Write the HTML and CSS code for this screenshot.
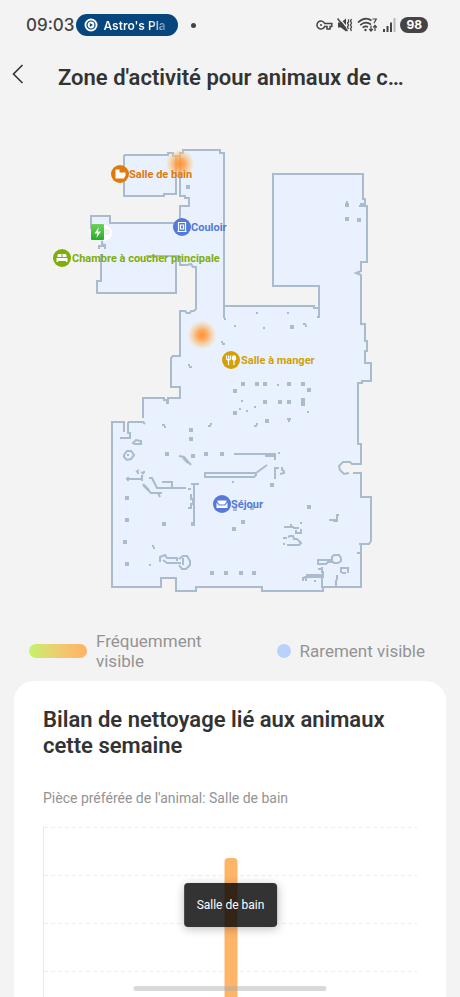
FILE: index.html
```
<!DOCTYPE html>
<html lang="fr">
<head>
  <meta charset="utf-8"/>
  <meta name="viewport" content="width=device-width, initial-scale=1.0"/>
  <title>Zone d'activité</title>
  <link rel="stylesheet" href="styles.css">
</head>
<body>
  <div class="status-bar">
    <span class="clock">09:03</span>
    <div class="now-playing">
      <svg width="14" height="14" viewBox="0 0 14 14"><circle cx="7" cy="7" r="6.5" fill="#fff"/><circle cx="7" cy="7" r="4" fill="none" stroke="#07467d" stroke-width="1.2"/><path d="M5.8 4.9 9 7 5.8 9.1z" fill="#07467d"/></svg>
      <span>Astro's Pla</span>
    </div>
    <span class="dot"></span>
    <div class="status-icons">
      <svg width="17" height="16" viewBox="0 0 17 16" fill="none" stroke="#444" stroke-width="1.5"><path d="M8.6 6.4A4 4 0 1 0 8.6 9.6H11V12H14V9.6H15.8V6.4z"/><circle cx="5" cy="8" r="1" fill="#444" stroke="none"/></svg>
      <svg width="16" height="16" viewBox="0 0 16 16"><path d="M1 5.5H4L9 1.5V14.5L4 10.5H1z" fill="#444"/><path d="M1.500 0 12 13" stroke="#f3f3f3" stroke-width="1.2"/><path d="M0.500 1.5 10.500 14" fill="none" stroke="#444" stroke-width="1.5"/><path d="M11.500 2.500v2.500l-1 1 1 2-1 2 1 2M14.500 2l-1 2 1 2-1 2 1 2-1 2 1 2" fill="none" stroke="#444" stroke-width="1.3"/></svg>
      <svg width="21" height="16" viewBox="0 0 21 16" fill="none" stroke="#444" stroke-width="1.6"><path d="M1 5.5Q8 -1 14.5 3.5M3.2 8.2Q8.5 3.5 14 7.5M5.6 10.6Q8.5 8.5 11 10"/><circle cx="8.5" cy="13" r="1.2" fill="#444" stroke="none"/><path d="M15.5 2H19.3L17 6.3M14 8.5V14M12.2 12 14 14 15.8 12M18 14V8.5M16.2 10.5 18 8.5 19.8 10.5" stroke-width="1.2"/></svg>
      <svg width="14" height="16" viewBox="0 0 14 16"><path d="M1 12h2v3H1zM4.5 9h2v6h-2zM8 5.500h2V15H8z" fill="#444"/><path d="M11.500 1h2v14h-2z" fill="#b9b9b9"/></svg>
      <span class="battery">98</span>
    </div>
  </div>

  <header>
    <button class="back-btn" aria-label="Retour">
      <svg width="12" height="20" viewBox="0 0 12 20"><path d="M10.500 1 1.500 10l9 9" fill="none" stroke="#333" stroke-width="1.6"/></svg>
    </button>
    <h1>Zone d'activité pour animaux de c…</h1>
  </header>

  <main>
    <svg class="map" viewBox="0 140 460 460">
      <defs>
        <radialGradient id="heat">
          <stop offset="0" stop-color="#ff922e"/>
          <stop offset="0.35" stop-color="#ffa04a" stop-opacity="0.85"/>
          <stop offset="0.75" stop-color="#f9c787" stop-opacity="0.45"/>
          <stop offset="1" stop-color="#f3e6b4" stop-opacity="0"/>
        </radialGradient>
        <linearGradient id="dock" x2="0" y2="1">
          <stop offset="0" stop-color="#6fd15a"/>
          <stop offset="1" stop-color="#27ab2b"/>
        </linearGradient>
      </defs>

      <!-- floor and outer walls -->
      <path class="floor" d="M124 155H168V153H173V156H180V153H183V150H220V153H224V306H314L316 308H319V286H273V174H363V199H365V203L360 206H367V262H361V271L356 273 361 275V324H365V341H367V351H365V363H371V381H362L358 383V444H361V464H352L350 462H343L339 466 340 470 344 474 349 473 353 473H361V497H371V541L369 544 361 545V587H323V591H262V587H196V591H176V578H161V587H112V422H124V433H129V422H143V398H180V387H171V358L173 356H180V311H185L187 313H190L194 311H196V270L193 267H187V265H180V256H176V293H97V281H101V246L103 242 91 236V216H110V223H180V206H189V198H185V196H180V179H176V194H164V196H124Z"/>
      <path class="wall" d="M124 155H168V153H173V156H180V153H183V150H220V153H224V306M224 306H314V308H319M224 300V318M319 318V286H273V174H363V199H365V204H360M359 206H367V262H361V271L356 273 361 275V324H365V341H367V351H365V363H371V381H362V383H357M358 383V444H361V464H352L350 462H343L339 466 340 470 344 474 349 473M353 473H361V497H371V541L369 544H359M361 545V587H323V591H262V587H196V591H176V578H161V587H112V422H125M124 422V432M128 422V433H130V438H120M128 422H143L145 424M143 418V398H164V400H167V403H168V398H180V387H171V358L173 356H180V311H185L187 313H190L191 311H194L196 309V267H193L191 264 187 265H180V256M146 256H180M176 256V293H97V281H101V254M91 229V216H110V223H180V206H189V198H185V196H180V180M176 180V194H164V196H124V155M176 157V180M180 157V180M102 240V244L105 245V249M99 249V246L104 246"/>

      <!-- furniture -->
      <path class="wall" d="M234 454H275V460M265 456H274M256 473 267 465M205 473H256V475L254 477H205ZM275 479V468H279M282 467V470L284 471V473L280 474M126 479H143M128 477V481M142 475V481M149 478H152L157 488H186M162 482H172V487M143 485 151 493H162M143 484 149 490M158 493 160 497M191 484H199M194 484V526M192 522V526M188 489H191M191 494V499H193V504H191V508H188M179 456 184 457 191 465M183 458 188 463"/>
      <path class="wall" d="M133 443 136 440 141 441V444H135ZM124 455 127 451H131L134 455 131 459 127 460 124 457ZM127 455H129M136 472 139 470M141 472 144 474M160 562V557L165 555 167 558H177V561M163 560 167 563H181M179 559 183 556H187L190 561V565L186 569H182L179 565M183 558V565"/>
      <path class="wall" d="M284 527H294M291 524V527M293 528H299M296 530V533H301V529M283 538H287M288 537 290 536H293L294 539H297L301 543 299 545H287M329 520H337M333 521H337V516M318 565V560H332V562H328L326 564H318M334 555H339L341 558V561L338 563H334L332 561V557ZM322 567V572H323V576H322V588M318 569H322M306 575H324M306 577H324M308 576L303 578V581M306 577V581M341 573V568H348V573M342 573H346M337 575V579L336 581V586M357 553H361"/>
      <path class="dots" d="M186 187h4M345 205h4M345 219h4M357 220h4M290 327h4M241 384h4M255 384h4M263 384h4M287 384h4M301 384h4M307 390h4M233 391h4M263 402h4M278 402h4M287 402h4M301 400h4M301 404h4M233 413h4M265 421h4M189 430h4M189 439h4M165 454h4M191 456h4M204 454h4M220 454h4M125 498h4M125 520h4M123 542h4M125 564h4M162 524h4M210 573h4M224 573h4M239 573h4M252 573h4M270 485h4M307 507h4M241 522h4M232 529h4M250 508h4M233 509h4"/>
      <path class="specks" d="M346 202h2M256 313h2M287 313h2M234 326h2M263 328h2M303 324h3M305 326h2M277 385h2M241 401h2M239 409h2M246 411h2M254 407h2M307 412h2M224 319h2M317 317h2M221 342h2M222 344h3M188 365h2M189 367h3M162 425h3M164 427h2M208 426h3M210 424h2M254 426h3M256 424h2M287 419h4M288 421h2M152 546h2M153 548h2M149 565h2M232 482h2M278 453h2M300 523h2M283 544h2M314 581h2M137 473h2M143 472h2M336 515h3"/>

      <!-- activity spots and charging dock -->
      <circle cx="180" cy="164" r="15" fill="url(#heat)"/>
      <circle cx="202" cy="335" r="15" fill="url(#heat)"/>
      <circle cx="104" cy="233" r="8" fill="#fff"/>
      <circle cx="107" cy="232" r="2" fill="none" stroke="#ddd"/>
      <rect x="91" y="224" width="13" height="16" rx="1" fill="url(#dock)"/>
      <path d="M99 227 94.500 233.500H97.500L96.300 238 101 231.500H97.800Z" fill="#fff"/>

      <!-- room labels -->
      <g fill="#e07a0b">
        <circle cx="120" cy="174" r="9"/>
        <path d="M115.500 169.500h4v3h6v3l-1.500 3h-8.500z" fill="#fff"/>
        <text x="129" y="178">Salle de bain</text>
      </g>
      <g fill="#5479d9">
        <circle cx="182" cy="227" r="9"/>
        <path d="M178.500 231V222.500H185.500V231M177.500 231.500H186.500M180.500 225H183.500V229H180.500Z" fill="none" stroke="#fff" stroke-width="1.200"/>
        <text x="191" y="231">Couloir</text>
      </g>
      <g fill="#7eae0b">
        <circle cx="62" cy="258" r="9"/>
        <path d="M57.500 257v-2l1-1h3v3zM62.500 257v-3h3l1 1v2zM56.500 258h11v4h-1.500v-1h-8v1h-1.500z" fill="#fff"/>
        <text x="72" y="262">Chambre à coucher principale</text>
      </g>
      <g fill="#d4a006">
        <circle cx="231" cy="360" r="9"/>
        <path d="M226.500 355.500V359L228.500 360.500V365M230.500 355.500V359L228.500 360.500V355.500M234 359V365" fill="none" stroke="#fff" stroke-width="1.200"/>
        <ellipse cx="234" cy="358" rx="2.200" ry="2.800" fill="#fff"/>
        <text x="241" y="364">Salle à manger</text>
      </g>
      <g fill="#5479d9">
        <circle cx="222" cy="504" r="9"/>
        <path d="M217.500 500.500H226.500V502L224.500 504.500H219.500L217.500 502ZM216.500 502.500 219 505.500H225L227.500 502.500V508H216.500Z" fill="#fff"/>
        <text x="231" y="508">Séjour</text>
      </g>
    </svg>

    <div class="legend">
      <div class="legend-item often"><span class="swatch-often"></span><span>Fréquemment visible</span></div>
      <div class="legend-item"><span class="swatch-rare"></span><span>Rarement visible</span></div>
    </div>

    <section class="card">
      <h2>Bilan de nettoyage lié aux animaux cette semaine</h2>
      <p>Pièce préférée de l'animal: Salle de bain</p>
      <div class="chart">
        <div class="grid-line"></div>
        <div class="grid-line"></div>
        <div class="grid-line"></div>
        <div class="grid-line"></div>
        <div class="bar"></div>
        <div class="tooltip">Salle de bain</div>
      </div>
    </section>
  </main>
  <div class="home-indicator"></div>
</body>
</html>
```
FILE: styles.css
```
html, body { margin: 0; padding: 0; height: 100%; }
body { display: flex; flex-direction: column; overflow: hidden; background: #f3f3f3; color: #333; font-family: Roboto, sans-serif; }

.status-bar { display: flex; align-items: center; height: 22px; padding: 14px 32px 0 26px; font-family: Inter, sans-serif; }
.clock { font-size: 17px; font-weight: 500; color: #444; }
.now-playing { display: flex; align-items: center; gap: 5px; height: 22px; box-sizing: border-box; margin-left: 2px; padding: 0 12px 0 8px; border-radius: 11px; background: #07467d; font-size: 12px; font-weight: 600; white-space: nowrap; }
.now-playing span { background: linear-gradient(90deg, #fff 75%, #5480a7 100%); background-clip: text; -webkit-background-clip: text; color: transparent; }
.dot { width: 5px; height: 5px; margin-left: 13px; border-radius: 50%; background: #444; }
.status-icons { display: flex; align-items: center; gap: 4px; margin-left: auto; }
.battery { padding: 0 6px; border-radius: 8px; background: #444; color: #fff; font-size: 12px; font-weight: 700; line-height: 16px; }

header { display: flex; align-items: center; padding: 26px 12px 0; height: 32px; }
.back-btn { display: flex; width: 46px; padding: 0 0 8px; border: none; background: none; cursor: pointer; }
h1 { flex: 1; margin: 0; font-size: 22px; line-height: 32px; font-weight: 600; white-space: nowrap; overflow: hidden; text-overflow: ellipsis; }

main { flex: 1; min-height: 0; display: flex; flex-direction: column; padding-top: 46px; }
.map { flex: none; width: 100%; height: auto; }
.map text { font-size: 11px; font-weight: 700; }
.floor { fill: #e9f1fe; }
.wall { fill: none; stroke: #a9bbcd; stroke-width: 2; }
.dots { stroke: #a9bbcd; stroke-width: 4; }
.specks { stroke: #a9bbcd; stroke-width: 2; }

.legend { display: flex; align-items: center; justify-content: space-between; padding: 31px 35px 10px 29px; color: #939393; font-size: 17px; line-height: 20px; }
.legend-item { display: flex; align-items: center; gap: 9px; }
.often { width: 190px; }
.swatch-often { flex: none; width: 58px; height: 14px; border-radius: 7px; background: linear-gradient(90deg, #c5f26b, #efcb72 50%, #ffb266); }
.swatch-rare { width: 14px; height: 14px; border-radius: 50%; background: #b9d2fb; }

.card { flex: 1; min-height: 0; display: flex; flex-direction: column; margin: 0 14px; padding: 26px 29px 0; border-radius: 20px 20px 0 0; background: #fff; }
h2 { margin: 0; font-size: 22px; line-height: 26px; font-weight: 600; }
.card p { margin: 29px 0 19px; color: #939393; font-size: 14px; line-height: 20px; }
.chart { position: relative; flex: 1; min-height: 0; border-left: 1px solid #e9e9e9; }
.grid-line { height: 48px; background: repeating-linear-gradient(90deg, #ececec 0 4px, transparent 4px 7px) top / 100% 1px no-repeat; }
.bar { position: absolute; top: 31px; bottom: 0; left: 50%; width: 13px; transform: translateX(-50%); border-radius: 4px 4px 0 0; background: #ffb568; }
.tooltip { position: absolute; top: 56px; left: 50%; transform: translateX(-50%); padding: 12px 13px; border-radius: 4px; background: rgba(0, 0, 0, 0.8); color: #fff; font-size: 12px; line-height: 20px; white-space: nowrap; box-shadow: 0 2px 10px rgba(0, 0, 0, 0.25); }
.home-indicator { position: fixed; bottom: 6px; left: 50%; width: 42%; height: 5px; transform: translateX(-50%); border-radius: 3px; background: rgba(170, 170, 170, 0.45); }
```
